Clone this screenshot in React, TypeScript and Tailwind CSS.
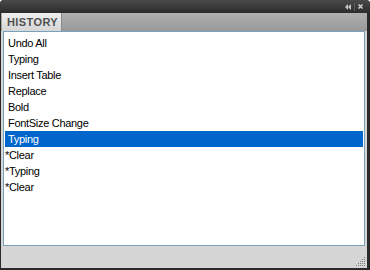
import React from "react";

const items = [
  "Undo All",
  "Typing",
  "Insert Table",
  "Replace",
  "Bold",
  "FontSize Change",
  "Typing",
  "*Clear",
  "*Typing",
  "*Clear",
];

export default function App() {
  return (
    <div className="w-[370px] h-[270px] bg-[#2a2a2a] rounded-t-[4px] flex flex-col pl-[1px] pr-[3px] pb-[2px]">
      <div className="h-[13px] flex items-center justify-end pr-[7px] gap-[3px] bg-gradient-to-b from-[#4a4a4a] to-[#2c2c2c] rounded-t-[4px] -mr-[3px] -ml-[1px]">
        <svg width="6" height="6" viewBox="0 0 6 6">
          <path d="M3 0 L0 3 L3 6 Z" fill="#c8c8c8" />
          <path d="M6 0 L3 3 L6 6 Z" fill="#c8c8c8" />
        </svg>
        <div className="w-px h-[8px] bg-[#5e5e5e]" />
        <svg width="5" height="5" viewBox="0 0 5 5">
          <path d="M0.5 0.5 L4.5 4.5 M4.5 0.5 L0.5 4.5" stroke="#d0d0d0" strokeWidth="1.5" />
        </svg>
      </div>
      <div className="flex-1 bg-[#d6d6d6] flex flex-col">
        <div className="h-[18px] flex bg-gradient-to-b from-[#b0b0b0] to-[#999999]">
          <div className="ml-[1px] w-[60px] h-[18px] bg-gradient-to-b from-[#eeeeee] to-[#d6d6d6] border-r border-[#8a8a8a] flex items-center pl-[5px]">
            <span className="text-[11px] font-bold text-[#505050] tracking-[0.4px]" style={{ fontFamily: "'Liberation Sans', Arial, sans-serif" }}>HISTORY</span>
          </div>
        </div>
        <div className="mx-[2px] h-[215px] bg-white border border-[#7ba2bd] pt-[3px] px-[1px]">
          {items.map((t, i) => (
            <div
              key={i}
              className={
                "h-[16px] flex items-center text-[11px] leading-none tracking-[-0.3px] " +
                (i === 6 ? "bg-[#0066cc] text-white" : "text-black") +
                (t.startsWith("*") ? " pl-0" : " pl-[3px]")
              }
              style={{ fontFamily: "'Liberation Sans', Arial, sans-serif" }}
            >
              {t}
            </div>
          ))}
        </div>
        <div className="flex-1 flex items-end justify-end pr-[1px] pb-[1px]">
          <svg width="11" height="11" viewBox="0 0 11 11">
            {[
              [9, 1], [7, 3], [9, 3], [5, 5], [7, 5], [9, 5], [3, 7], [5, 7], [7, 7], [9, 7], [1, 9], [3, 9], [5, 9], [7, 9], [9, 9],
            ].map(([x, y], k) => (
              <rect key={k} x={x} y={y} width="1" height="1" fill="#7a7a7a" />
            ))}
          </svg>
        </div>
      </div>
    </div>
  );
}
